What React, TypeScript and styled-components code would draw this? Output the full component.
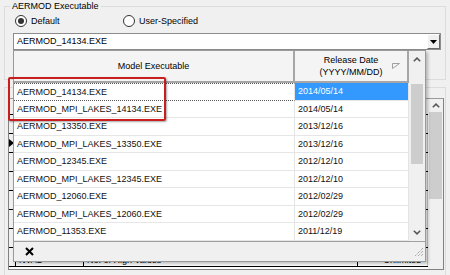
import React from "react";
import styled, { createGlobalStyle } from "styled-components";

const GlobalStyle = createGlobalStyle`
  html, body {
    margin: 0;
    padding: 0;
    background: #f0f0f0;
  }
  body {
    font-family: "Liberation Sans", Arial, sans-serif;
    font-size: 9px;
    color: #000;
  }
`;

const Window = styled.div`
  position: relative;
  width: 450px;
  height: 275px;
  overflow: hidden;
  background: #f0f0f0;
`;

const GroupBox = styled.fieldset`
  margin: 0 4px 0 4px;
  padding: 0 4px 29px 8px;
  border: 1px solid #dcdcdc;
  min-width: 0;
`;

const Legend = styled.legend`
  padding: 0 2px;
  margin-left: -3px;
  line-height: 12px;
`;

const RadioRow = styled.div`
  display: flex;
  align-items: center;
  height: 12px;
  margin-top: 3px;
`;

const RadioOption = styled.label<{ $width?: number }>`
  display: flex;
  align-items: center;
  gap: 4px;
  margin-left: 2px;
  width: ${p => (p.$width ? `${p.$width}px` : "auto")};
`;

const RadioCircle = styled.span<{ $checked?: boolean }>`
  box-sizing: border-box;
  width: 12px;
  height: 12px;
  border-radius: 50%;
  border: 1px solid #333;
  background: #fff;
  display: flex;
  align-items: center;
  justify-content: center;
  &::after {
    content: "";
    width: 6px;
    height: 6px;
    border-radius: 50%;
    background: #333;
    display: ${p => (p.$checked ? "block" : "none")};
  }
`;

const Combo = styled.div`
  box-sizing: border-box;
  margin-top: 6px;
  height: 17px;
  display: flex;
  align-items: stretch;
  background: #fff;
  border: 1px solid #8c8c8c;
`;

const ComboText = styled.div`
  flex: 1;
  padding-left: 3px;
  line-height: 15px;
`;

const DropButton = styled.div`
  box-sizing: border-box;
  width: 13px;
  background: #f0f0f0;
  border-left: 1px solid #fff;
  border-top: 1px solid #fff;
  border-right: 1px solid #696969;
  border-bottom: 1px solid #696969;
  display: flex;
  align-items: center;
  justify-content: center;
`;

const LowerGroup = styled.div`
  box-sizing: border-box;
  margin: 7px 4px 0 4px;
  padding: 10px 1px 0 3px;
  height: 200px;
  border: 1px solid #dcdcdc;
`;

const BgGrid = styled.div`
  display: flex;
  height: 170px;
  border: 1px solid #828282;
  border-top-color: #9a9a9a;
  background: #fff;
`;

const BgTable = styled.div`
  flex: 1;
  display: flex;
  flex-direction: column;
  overflow: hidden;
`;

const BgHeader = styled.div`
  height: 15px;
  flex: none;
  border-bottom: 1px solid #000;
  background: #f0f0f0;
`;

const BgRow = styled.div`
  flex: none;
  display: flex;
  height: 18px;
  border-bottom: 1px solid #000;
`;

const BgCell = styled.div<{ $w?: number; $light?: boolean }>`
  box-sizing: border-box;
  width: ${p => (p.$w ? `${p.$w}px` : "auto")};
  flex: ${p => (p.$w ? "none" : "1")};
  border-right: 1px solid ${p => (p.$light ? "#c8c8c8" : "#000")};
  padding: 7px 0 0 3px;
  line-height: 11px;
  white-space: nowrap;
  overflow: hidden;
  text-align: ${p => (p.$light ? "right" : "left")};
  padding-right: ${p => (p.$light ? "6px" : "0")};
`;

const RowHead = styled.div`
  box-sizing: border-box;
  width: 7px;
  flex: none;
  border-right: 1px solid #000;
  display: flex;
  align-items: center;
  background: #f0f0f0;
`;

const ScrollBar = styled.div<{ $w: number }>`
  flex: none;
  width: ${p => p.$w}px;
  display: flex;
  flex-direction: column;
  align-items: center;
  background: #f0f0f0;
`;

const ScrollButton = styled.div<{ $h: number }>`
  height: ${p => p.$h}px;
  width: 100%;
  flex: none;
  display: flex;
  align-items: center;
  justify-content: center;
`;

const Thumb = styled.div<{ $top: number; $h: number; $w: number }>`
  margin-top: ${p => p.$top}px;
  height: ${p => p.$h}px;
  width: ${p => p.$w}px;
  background: #cdcdcd;
  flex: none;
`;

const Popup = styled.div`
  position: absolute;
  left: 13px;
  top: 50px;
  width: 413px;
  height: 212px;
  box-sizing: border-box;
  border: 1px solid #9a9a9a;
  background: #f0f0f0;
  box-shadow: 2px 2px 3px rgba(0, 0, 0, 0.25);
  display: flex;
  flex-direction: column;
`;

const PopupBody = styled.div`
  display: flex;
  height: 190px;
  flex: none;
`;

const Table = styled.div`
  width: 395px;
  display: flex;
  flex-direction: column;
  overflow: hidden;
  background: #fff;
`;

const HeaderRow = styled.div`
  display: flex;
  height: 32px;
  flex: none;
`;

const HeaderCell = styled.div<{ $w: number }>`
  box-sizing: border-box;
  width: ${p => p.$w}px;
  position: relative;
  background: #f4f4f4;
  border-right: 2px solid #a6a6a6;
  border-bottom: 2px solid #a6a6a6;
  display: flex;
  flex-direction: column;
  align-items: center;
  justify-content: center;
  text-align: center;
  line-height: 12px;
`;

const SortGlyph = styled.svg`
  position: absolute;
  right: 7px;
  top: 12px;
`;

const Row = styled.div`
  display: flex;
  height: 17.5px;
  flex: none;
`;

const Cell = styled.div<{ $w: number; $selected?: boolean; $focus?: boolean }>`
  box-sizing: border-box;
  width: ${p => p.$w}px;
  padding-left: 3px;
  display: flex;
  align-items: center;
  white-space: nowrap;
  color: ${p => (p.$selected ? "#fff" : "#111")};
  background: ${p => (p.$selected ? "#3399ff" : "#fff")};
  border-right: 1px solid #e4e4e4;
  border-bottom: 1px ${p => (p.$focus ? "dotted #555" : "solid #e6e6e6")};
  border-top: ${p => (p.$focus ? "1px dotted #555" : "none")};
`;

const BottomBar = styled.div`
  flex: 1;
  display: flex;
  align-items: center;
  justify-content: space-between;
  border-top: 1px solid #a0a0a0;
  padding: 0 1px 0 11px;
`;

const Annotation = styled.div`
  position: absolute;
  left: 8px;
  top: 77px;
  width: 158px;
  height: 44px;
  box-sizing: border-box;
  border: 2px solid #c81e1e;
  border-radius: 2px;
  box-shadow: 1px 1px 2px rgba(0, 0, 0, 0.35);
`;

const Chevron = ({ up }: { up?: boolean }) => (
  <svg width="8" height="5" viewBox="0 0 8 5">
    <polyline
      points={up ? "0.8,4.3 4,1.1 7.2,4.3" : "0.8,0.7 4,3.9 7.2,0.7"}
      fill="none"
      stroke="#555"
      strokeWidth="1.5"
    />
  </svg>
);

const executables = [
  ["AERMOD_14134.EXE", "2014/05/14"],
  ["AERMOD_MPI_LAKES_14134.EXE", "2014/05/14"],
  ["AERMOD_13350.EXE", "2013/12/16"],
  ["AERMOD_MPI_LAKES_13350.EXE", "2013/12/16"],
  ["AERMOD_12345.EXE", "2012/12/10"],
  ["AERMOD_MPI_LAKES_12345.EXE", "2012/12/10"],
  ["AERMOD_12060.EXE", "2012/02/29"],
  ["AERMOD_MPI_LAKES_12060.EXE", "2012/02/29"],
  ["AERMOD_11353.EXE", "2011/12/19"],
];

const bgRows = 8;

export default function App() {
  return (
    <Window>
      <GlobalStyle />
      <GroupBox>
        <Legend>{"AERMOD Executable"}</Legend>
        <RadioRow>
          <RadioOption $width={106}>
            <RadioCircle $checked />
            {"Default"}
          </RadioOption>
          <RadioOption>
            <RadioCircle />
            {"User-Specified"}
          </RadioOption>
        </RadioRow>
        <Combo>
          <ComboText>{"AERMOD_14134.EXE"}</ComboText>
          <DropButton>
            <svg width="7" height="4" viewBox="0 0 7 4">
              <polygon points="0,0 7,0 3.5,4" fill="#000" />
            </svg>
          </DropButton>
        </Combo>
      </GroupBox>

      <LowerGroup>
        <BgGrid>
          <BgTable>
            <BgHeader />
            {Array.from({ length: bgRows }).map((_, i) => (
              <BgRow key={`bg:${i}`}>
                <RowHead>
                  {i === 1 ? (
                    <svg width="5" height="8" viewBox="0 0 5 8">
                      <polygon points="0,0 5,4 0,8" fill="#000" />
                    </svg>
                  ) : null}
                </RowHead>
                <BgCell $w={68}>{i === bgRows - 1 ? "NVAL" : ""}</BgCell>
                <BgCell $w={274}>{i === bgRows - 1 ? "No. of High Values" : ""}</BgCell>
                <BgCell $light>{i === bgRows - 1 ? "Unlimited" : ""}</BgCell>
              </BgRow>
            ))}
          </BgTable>
          <ScrollBar $w={15}>
            <ScrollButton $h={13}>
              <Chevron up />
            </ScrollButton>
            <Thumb $top={0} $h={87} $w={13} />
          </ScrollBar>
        </BgGrid>
      </LowerGroup>

      <Popup>
        <PopupBody>
          <Table>
            <HeaderRow>
              <HeaderCell $w={281}>{"Model Executable"}</HeaderCell>
              <HeaderCell $w={114}>
                <div>{"Release Date"}</div>
                <div>{"(YYYY/MM/DD)"}</div>
                <SortGlyph width="8" height="6" viewBox="0 0 8 6">
                  <polygon points="0.5,0.5 7.5,0.5 0.5,5.5" fill="none" stroke="#a0a0a0" strokeWidth="1" />
                </SortGlyph>
              </HeaderCell>
            </HeaderRow>
            {executables.map(([name, date], i) => (
              <Row key={`exe:${name}`}>
                <Cell $w={281} $focus={i === 0}>{name}</Cell>
                <Cell $w={114} $selected={i === 0}>{date}</Cell>
              </Row>
            ))}
          </Table>
          <ScrollBar $w={16}>
            <ScrollButton $h={17}>
              <Chevron up />
            </ScrollButton>
            <Thumb $top={16} $h={80} $w={12} />
            <div style={{ flex: 1 }} />
            <ScrollButton $h={17}>
              <Chevron />
            </ScrollButton>
          </ScrollBar>
        </PopupBody>
        <BottomBar>
          <svg width="9" height="9" viewBox="0 0 9 9">
            <path d="M1 1 L8 8 M8 1 L1 8" stroke="#000" strokeWidth="2" />
          </svg>
          <svg width="11" height="11" viewBox="0 0 11 11">
            <path d="M10 2 L2 10 M10 5 L5 10 M10 8 L8 10" stroke="#8a8a8a" strokeWidth="1" strokeDasharray="1 1" />
          </svg>
        </BottomBar>
      </Popup>

      <Annotation />
    </Window>
  );
}
